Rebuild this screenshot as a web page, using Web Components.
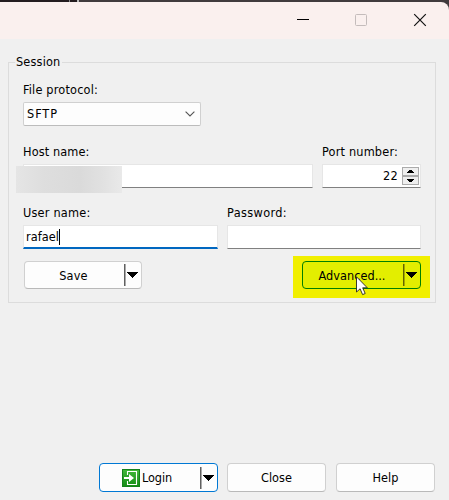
<!DOCTYPE html>
<html lang="en">
<head>
<meta charset="utf-8">
<title>Session</title>
<style>
html,body{margin:0;height:100%;overflow:hidden;background:#f0f0f0}
body{font:13px/16px "DejaVu Sans Condensed","Noto Sans",sans-serif;color:#000}
</style>
</head>
<body>
<login-dialog></login-dialog>
<script>
const define=(name,html,setup)=>customElements.define(name,class extends HTMLElement{
  constructor(){super();this.attachShadow({mode:'open'}).innerHTML=html;}
  connectedCallback(){if(setup)setup(this,this.shadowRoot);}
});

/* A line of text tracked to a given width. */
define('ui-text',`<style>:host{display:block;white-space:pre;height:16px;line-height:16px;font-family:"DejaVu Sans Condensed","DejaVu Sans",sans-serif;font-stretch:condensed;font-size:12.6px}span{display:inline-block}</style><span><slot></slot></span>`,(el,root)=>{
  const span=root.querySelector('span'),w=parseFloat(el.getAttribute('w'));
  if(w)span.style.letterSpacing=(w-span.getBoundingClientRect().width)/el.textContent.length+'px';
});

define('title-bar',`<style>
:host{display:block;background:linear-gradient(90deg,#231c1f 0 69px,#888 69px 70px,#231c1f 70px 77px,#bbb 77px 79px,#403b3d 79px);padding-top:2px;height:37px}
.bar{height:37px;box-sizing:border-box;background:#faf0ee;border-top-right-radius:8px;display:flex;justify-content:flex-end;padding:11px 22px 0 0;gap:45px}
svg{width:14px;height:14px;display:block;fill:none}
</style><div class="bar">
<svg viewBox="0 0 14 14"><path d="M2 6.5h12" stroke="#000"/></svg>
<svg viewBox="0 0 14 14"><rect x="1.5" y="1.5" width="11" height="11" rx="1" stroke="#c4bcbb"/></svg>
<svg viewBox="0 0 14 14"><path d="M1.2 1.2 12.8 12.8M12.8 1.2 1.2 12.8" stroke="#111" stroke-width="1.2"/></svg></div>`);

define('group-box',`<style>
:host{display:block;box-sizing:border-box;width:428px;height:241px;margin:23px 0 0 8px;border:1px solid #dcdcdc}
.legend{width:max-content;margin:-9px 0 0 6px;padding:0 1px;background:#f0f0f0;height:16px}
.body{padding:12px 0 0 14px}
</style><div class="legend"><slot name="legend"></slot></div><div class="body"><slot></slot></div>`);

define('form-row',`<style>:host{display:flex;gap:9px}</style><slot></slot>`);
define('form-field',`<style>:host{display:block}.control{margin-top:4px}</style><slot name="label"></slot><div class="control"><slot></slot></div>`);

define('select-box',`<style>:host{display:flex;justify-content:space-between;align-items:center;box-sizing:border-box;width:178px;height:24px;padding:0 5px 0 3px;background:#fdfdfd;border:1px solid #d0d0d0;border-bottom-color:#bcbcbc;border-radius:2px}svg{width:10px;height:6px}</style><slot></slot><svg viewBox="0 0 10 6"><path d="M.6.6 5 5 9.4.6" fill="none" stroke="#555" stroke-width="1.1"/></svg>`);

define('text-input',`<style>
:host{display:flex;align-items:center;box-sizing:border-box;height:24px;padding-left:2px;background:#fff;border:1px solid #e6e6e6;border-bottom-color:#808080;position:relative}
:host([focused]){border-bottom:2px solid #0067c0}
:host([focused])::after{content:"";width:1px;height:16px;background:#000}
:host([number]){justify-content:flex-end;padding-right:1px;gap:4px}
</style><slot></slot>`,el=>{el.style.width=el.getAttribute('width')+'px';});

define('spin-buttons',`<style>:host{display:block;width:17px;height:18px}svg{display:block}</style>
<svg width="17" height="18" viewBox="0 0 17 18"><g fill="#efefef" stroke="#ababab"><rect x=".5" y=".5" width="16" height="8"/><rect x=".5" y="9.5" width="16" height="8"/></g><path d="M5 6h7V5h-1V4h-1V3H7v1H6v1H5zM5 12h7v1h-1v1h-1v1H7v-1H6v-1H5z"/></svg>`);

define('blurred-name',`<style>:host{display:block;position:absolute;left:-7px;top:2px;width:106px;height:27px;background:linear-gradient(90deg,#e5e5e5,#dedede 25%,#dadada 60%,#e1e1e1 82%,#e9e9e9)}</style>`);

define('push-button',`<style>
:host{display:flex;box-sizing:border-box;height:28px;background:#fdfdfd;border:1px solid #d0d0d0;border-bottom-color:#b9b9b9;border-radius:4px}
:host([default]){border-color:#0078d4;height:29px}
:host([tall]){height:29px}
:host([marked]){background:#e3ee00;border-color:#008000}
.face{flex:1;display:flex;justify-content:center;align-items:center;gap:2px;padding-top:1px}
:host([split]) .face{padding-right:2px}
:host([default]) .face{padding-right:6px}
.drop{display:none;width:17px;align-items:center}
:host([split]) .drop{display:flex}
i{width:1px;height:22px;background:#606060;border-right:1px solid #aaa;margin-right:1px}
:host([marked]) i{background:#626500;border-color:#a5aa00}
</style><div class="face"><slot></slot></div><div class="drop"><i></i><svg width="11" height="6" viewBox="0 0 11 6"><path d="M0 0h11v1h-1v1H9v1H8v1H7v1H6v1H5V5H4V4H3V3H2V2H1V1H0z"/></svg></div>`,el=>{el.style.width=el.getAttribute('width')+'px';});

define('login-icon',`<style>:host{display:block;width:18px;height:18px}svg{display:block}</style><svg width="18" height="18" viewBox="0 0 18 18"><defs><linearGradient id="g" x2="0" y2="1"><stop stop-color="#42b83a"/><stop offset="1" stop-color="#158c16"/></linearGradient></defs><rect x=".5" y=".5" width="17" height="17" fill="url(#g)" stroke="#14821a"/><path d="M5.5 6V2.5h9v13h-9V12" fill="none" stroke="#fff" stroke-width="1.1"/><path d="M2 8h5V5l5 4-5 4v-3H2z" fill="#fff"/></svg>`);

/* Highlighter rectangle around the wrapped control. */
define('highlight-mark',`<style>:host{display:block;box-sizing:border-box;width:137px;height:42px;padding:5px 9px;background:#f1ef00;position:relative}svg{position:absolute;left:63px;top:20px}</style><slot></slot><svg width="13" height="20" viewBox="0 0 13 20"><path d="M.5.8V16l3.6-3.2 2.5 5.8 2.6-1.1-2.5-5.7h4.6z" fill="#fff" stroke="#222" stroke-width=".9"/></svg>`);

define('login-dialog',`<style>
:host{display:flex;flex-direction:column;width:449px;height:500px;background:#f0f0f0}
.host{margin-top:18px}.user{margin-top:17px}
.host-input{position:relative}
.actions{display:flex;justify-content:space-between;margin-top:7px;padding-right:5px}
.actions push-button[first]{margin:5px 0 0 1px}
.footer{display:flex;gap:9px;margin:auto 0 8px 99px}
.gap{margin-left:1px}
</style>
<title-bar></title-bar>
<group-box>
<ui-text slot="legend" w="44.5">Session</ui-text>
<form-field><ui-text slot="label" w="75">File protocol:</ui-text><select-box><ui-text w="31">SFTP</ui-text></select-box></form-field>
<form-row class="host">
<form-field><ui-text slot="label" w="66.5">Host name:</ui-text><div class="host-input"><text-input width="290"></text-input><blurred-name></blurred-name></div></form-field>
<form-field><ui-text slot="label" w="76">Port number:</ui-text><text-input number width="99"><ui-text w="15">22</ui-text><spin-buttons></spin-buttons></text-input></form-field>
</form-row>
<form-row class="user">
<form-field><ui-text slot="label" w="67.5">User name:</ui-text><text-input focused width="195"><ui-text w="33">rafael</ui-text></text-input></form-field>
<form-field><ui-text slot="label" w="60">Password:</ui-text><text-input width="194"></text-input></form-field>
</form-row>
<div class="actions"><push-button first split width="118"><ui-text w="28.5">Save</ui-text></push-button><highlight-mark><push-button marked split width="119"><ui-text w="67">Advanced...</ui-text></push-button></highlight-mark></div>
</group-box>
<div class="footer"><push-button default split width="119"><login-icon></login-icon><ui-text w="30">Login</ui-text></push-button><push-button tall width="99"><ui-text w="31">Close</ui-text></push-button><push-button tall class="gap" width="99"><ui-text w="26">Help</ui-text></push-button></div>`);
</script>
</body>
</html>
